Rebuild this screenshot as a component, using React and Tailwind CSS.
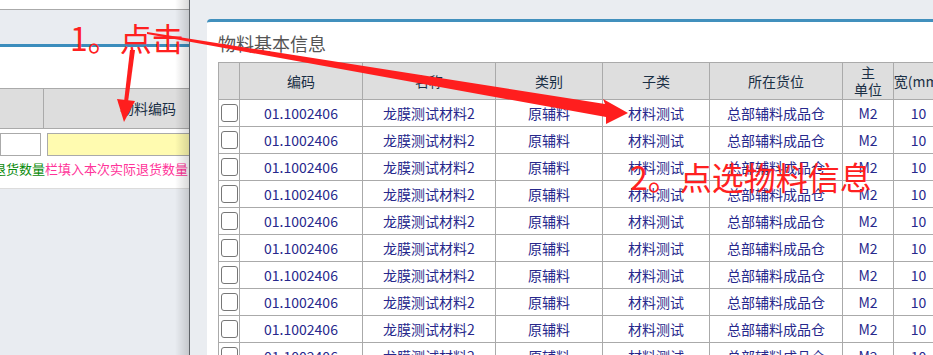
import React from "react";

const rows = Array.from({ length: 10 }, () => ({
  code: "01.1002406",
  name: "龙膜测试材料2",
  type: "原辅料",
  sub: "材料测试",
  place: "总部辅料成品仓",
  unit: "M2",
  width: "10",
}));

const font = { fontFamily: '"Noto Sans CJK SC", "Noto Sans", sans-serif' };

function LeftPage() {
  return (
    <div className="relative w-[190px] shrink-0 overflow-hidden border-r border-[#5f6368] bg-[#e9ecf1]">
      <div className="w-[320px]">
        <div className="h-[10px] bg-white border-b border-[#aaa]" />
        <div className="h-[37px] bg-[#e9ecf1] border-b-[3px] border-[#3b8dbd]" />
        <div className="h-[41px] bg-white" />

        {/* table header */}
        <div className="flex h-[41px] border-y border-[#aaa] bg-[#dddddd]">
          <div className="w-[44px] border-r border-[#aaa]" />
          <div className="w-[208px] flex items-center justify-center text-[14px] text-[#1a2f45]">
            物料编码
          </div>
        </div>

        {/* input row */}
        <div className="h-[31px] bg-white flex items-start pt-[4px]">
          <div className="w-[41px] h-[23px] border border-[#aaa] bg-white" />
          <div className="ml-[6px] w-[220px] h-[23px] border border-[#aaa] bg-[#fffbb0]" />
        </div>
        <div className="h-[18px] bg-white leading-[18px] text-[13px] whitespace-nowrap -ml-[7px]">
          <span className="text-[#0a8a0a]">退货数量</span>
          <span className="text-[#ff3399]">栏填入本次实际退货数量</span>
        </div>
        <div className="h-[11px] bg-white border-b border-[#dcdcdc]" />
      </div>
      <div className="absolute top-0 right-0 bottom-0 w-[14px] bg-gradient-to-r from-transparent to-black/15" />
    </div>
  );
}

function Cell({ w, children, className = "" }) {
  return (
    <div
      className={`${w} shrink-0 h-full border-r border-[#aaa] flex items-center justify-center overflow-hidden whitespace-nowrap ${className}`}
    >
      {children}
    </div>
  );
}

function MaterialTable() {
  return (
    <div className="border-t border-l border-[#aaa] w-[800px]">
      <div className="flex h-[37px] bg-[#dedede] border-b border-[#aaa] text-[14px] text-[#1a2f45]">
        <Cell w="w-[21px]" />
        <Cell w="w-[123px]">编码</Cell>
        <Cell w="w-[133px]">名称</Cell>
        <Cell w="w-[107px]">类别</Cell>
        <Cell w="w-[107px]">子类</Cell>
        <Cell w="w-[133px]">所在货位</Cell>
        <Cell w="w-[51px]" className="flex-col leading-[17px]">
          <span>主</span>
          <span>单位</span>
        </Cell>
        <Cell w="w-[50px]">宽(mm)</Cell>
        <Cell w="w-[70px]">长(mm)</Cell>
      </div>

      {rows.map((r, i) => (
        <div key={i} className="flex h-[27px] bg-white border-b border-[#aaa] text-[14px] text-[#27288c]">
          <Cell w="w-[21px]">
            <div className="w-[17px] h-[18px] rounded-[3px] border-[1.5px] border-[#777] bg-white" />
          </Cell>
          <Cell w="w-[123px]">{r.code}</Cell>
          <Cell w="w-[133px]">{r.name}</Cell>
          <Cell w="w-[107px]">{r.type}</Cell>
          <Cell w="w-[107px]">{r.sub}</Cell>
          <Cell w="w-[133px]">{r.place}</Cell>
          <Cell w="w-[51px]">{r.unit}</Cell>
          <Cell w="w-[50px]">{r.width}</Cell>
          <Cell w="w-[70px]">10</Cell>
        </div>
      ))}
    </div>
  );
}

function Annotations() {
  return (
    <div className="absolute inset-0 pointer-events-none">
      <svg width="933" height="355" className="absolute inset-0">
        {/* arrow 1 */}
        <polygon points="130,50 135,50 128,102 124,102" fill="#ff1e1e" />
        <polygon points="117,99 135,101 124,122" fill="#ff1e1e" />
        {/* arrow 2 */}
        <polygon
          points="147,32 605,104 603,99 628,113 606,124 606,117 147,34"
          fill="#ff1e1e"
        />
      </svg>
      <div
        className="absolute left-[70px] top-[17px] text-[32px] leading-[40px] font-normal text-[#ff2020] whitespace-nowrap"
        style={font}
      >
        1。点击
      </div>
      <div
        className="absolute left-[630px] top-[156px] text-[32px] leading-[40px] font-normal text-[#ff2020] whitespace-nowrap"
        style={font}
      >
        2。点选物料信息
      </div>
    </div>
  );
}

export default function App() {
  return (
    <div className="relative w-[933px] h-[355px] overflow-hidden flex bg-[#eaedf1]" style={font}>
      <LeftPage />
      <div className="flex-1 min-w-0 pl-[17px] pt-[19px] overflow-hidden">
        <div className="h-[400px] bg-white border-t-[3px] border-[#4190bd] rounded-tl-[4px] pl-[11px] overflow-hidden">
          <div className="h-[40px] pt-[9px] text-[18px] leading-[24px] text-[#555]">物料基本信息</div>
          <MaterialTable />
        </div>
      </div>
      <Annotations />
    </div>
  );
}
